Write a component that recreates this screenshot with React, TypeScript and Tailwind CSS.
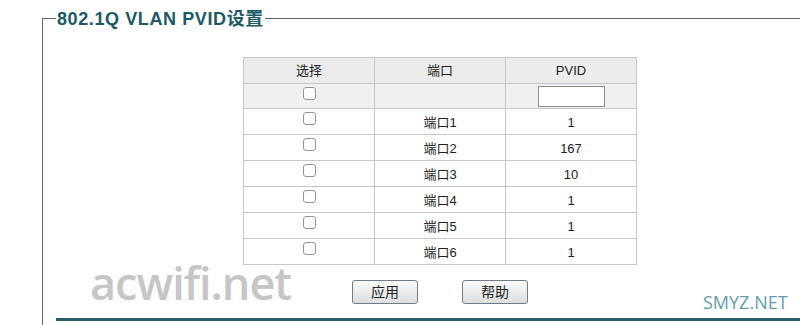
import React from "react";

interface PortRow {
  port: string;
  pvid: string;
}

const ports: PortRow[] = [
  { port: "端口1", pvid: "1" },
  { port: "端口2", pvid: "167" },
  { port: "端口3", pvid: "10" },
  { port: "端口4", pvid: "1" },
  { port: "端口5", pvid: "1" },
  { port: "端口6", pvid: "1" },
];

const Box = ({ h = "h-[25px]" }: { h?: string }) => (
  <div className={`flex justify-center pt-[3px] ${h}`}>
    <input
      type="checkbox"
      className="appearance-none w-[13px] h-[13px] rounded-[3px] border border-[#939393] bg-white"
    />
  </div>
);

const Btn = ({ label }: { label: string }) => (
  <button className="w-[66px] h-[24px] rounded-[3px] border border-[#6f7c88] bg-gradient-to-b from-[#fafafa] to-[#dedede] text-[14px] text-[#222] leading-none">
    {label}
  </button>
);

export default function App() {
  return (
    <div className="relative w-[800px] h-[325px] overflow-hidden bg-white font-['Liberation_Sans','Noto_Sans_CJK_SC',sans-serif] text-[#222]">
      <div className="relative ml-[42px] mt-[18px] pl-[13px] h-[400px] border-t border-l border-[#666]">
        {/* legend sits over the top border line */}
        <span className="absolute left-[13px] -top-[10px] bg-white px-[1px] text-[18px] leading-[20px] font-bold text-[#1c5966] tracking-[0.6px]">
          802.1Q VLAN PVID设置
        </span>

        <table className="ml-[187px] mt-[38px] w-[394px] border-collapse text-[13px] text-center table-fixed">
          <thead>
            <tr className="bg-[#ececec] h-[26px]">
              <th className="font-normal border border-[#c6c6c6]">选择</th>
              <th className="font-normal border border-[#c6c6c6]">端口</th>
              <th className="font-normal border border-[#c6c6c6]">PVID</th>
            </tr>
          </thead>
          <tbody>
            <tr className="bg-[#f0f0f0]">
              <td className="border border-[#c6c6c6] p-0">
                <Box h="h-[24px]" />
              </td>
              <td className="border border-[#c6c6c6] p-0"></td>
              <td className="border border-[#c6c6c6] p-0">
                <div className="flex justify-center items-center h-[24px]">
                  <input
                    type="text"
                    className="w-[67px] h-[21px] border border-[#8a8f96] bg-white outline-none"
                  />
                </div>
              </td>
            </tr>
            {ports.map((p) => (
              <tr key={p.port} className="bg-white">
                <td className="border border-[#c6c6c6] p-0">
                  <Box />
                </td>
                <td className="border border-[#c6c6c6] p-0 pt-[2px]">{p.port}</td>
                <td className="border border-[#c6c6c6] p-0 pt-[2px]">{p.pvid}</td>
              </tr>
            ))}
          </tbody>
        </table>

        <div className="flex gap-[44px] ml-[296px] mt-[15px]">
          <Btn label="应用" />
          <Btn label="帮助" />
        </div>

        <div className="mt-[14px] h-[3px] bg-[#2c5d68]" />
      </div>

      {/* watermarks laid over the page */}
      <div className="absolute left-[90px] top-[253px] font-['Open_Sans',sans-serif] font-semibold text-[45px] leading-[60px] text-[#c6c6c6] tracking-[-1px]">
        acwifi.net
      </div>
      <div className="absolute left-[703px] top-[290px] font-['Open_Sans',sans-serif] text-[18px] leading-[24px] text-[#5f9dab]">
        SMYZ.NET
      </div>
    </div>
  );
}
